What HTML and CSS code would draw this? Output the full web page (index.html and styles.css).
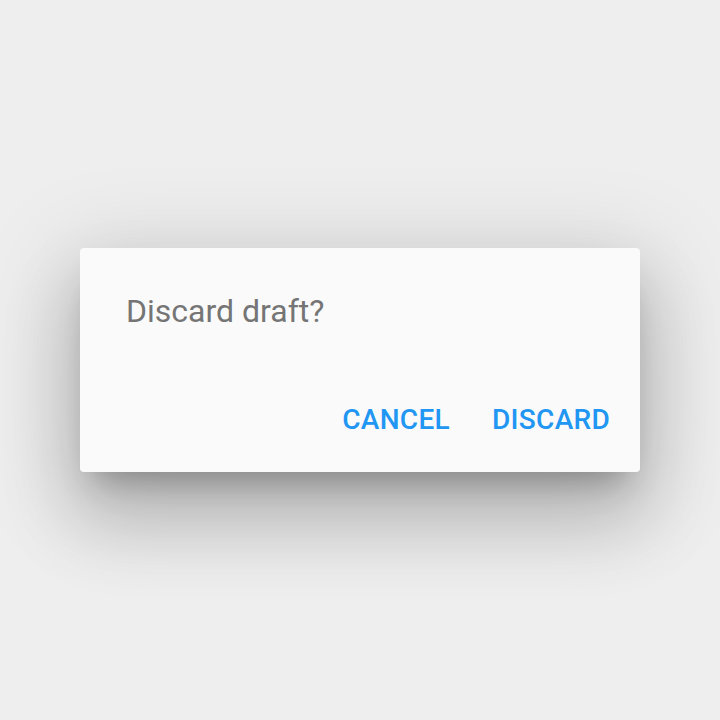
FILE: index.html
```html
<!DOCTYPE html>
<html>
<head>
<meta charset="utf-8">
<link rel="stylesheet" href="styles.css">
</head>
<body>
<div class="stage">
  <div class="dialog">
    <div class="content">Discard draft?</div>
    <div class="actions">
      <button class="btn">CANCEL</button>
      <button class="btn">DISCARD</button>
    </div>
  </div>
</div>
</body>
</html>
```
FILE: styles.css
```css
html, body {
  margin: 0;
  padding: 0;
  background: #eeeeee;
}
.stage {
  width: 720px;
  height: 720px;
  display: flex;
  align-items: center;
  justify-content: center;
}
.dialog {
  width: 560px;
  height: 224px;
  box-sizing: border-box;
  background: #fafafa;
  border-radius: 4px;
  display: flex;
  flex-direction: column;
  box-shadow: 0 22px 30px -14px rgba(0,0,0,.26), 0 48px 76px 6px rgba(0,0,0,.16), 0 18px 92px 16px rgba(0,0,0,.13);
  font-family: Roboto, "Noto Sans", sans-serif;
}
.content {
  padding: 43px 48px 0 46px;
  font-size: 32px;
  line-height: 40px;
  color: #757575;
  flex: 1;
}
.actions {
  display: flex;
  justify-content: flex-end;
  padding: 0 14px 16px 16px;
  gap: 10px;
}
.btn {
  font-family: Roboto, "Noto Sans", sans-serif;
  font-weight: 500;
  font-size: 28px;
  color: #2196f3;
  background: none;
  border: none;
  padding: 0 16px;
  height: 72px;
  line-height: 72px;
  letter-spacing: 0.3px;
}
```
